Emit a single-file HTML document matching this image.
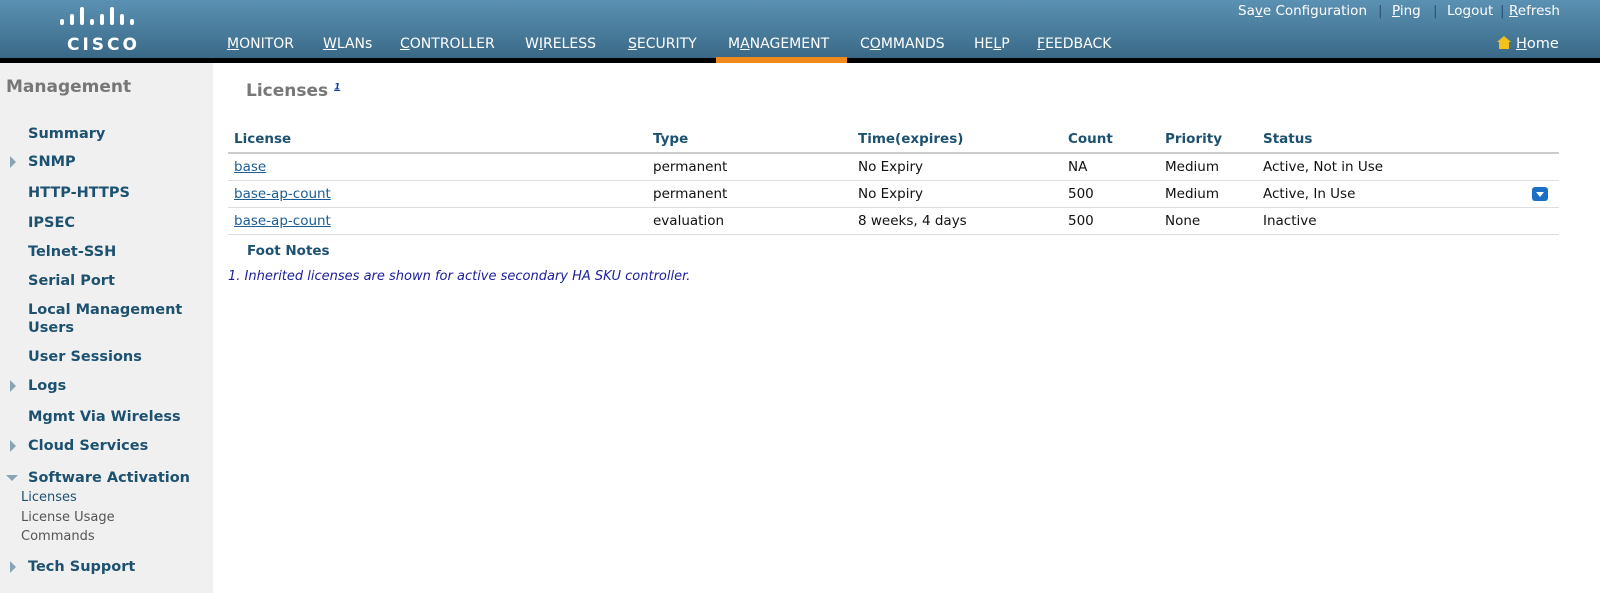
<!DOCTYPE html>
<html><head><style>
body{margin:0;width:1600px;height:593px;overflow:hidden;font-family:"DejaVu Sans",Verdana,sans-serif;background:#fff;position:relative}
#hdr{position:absolute;left:0;top:0;width:1600px;height:58px;background:linear-gradient(#5b91b3,#3a6987)}
#blk{position:absolute;left:0;top:58px;width:1600px;height:5px;background:#000}
.nav{position:absolute;top:36px;color:#fff;font-size:14px;white-space:nowrap}
.u{text-decoration:underline}
.top{position:absolute;top:3px;color:#fff;font-size:13.5px;white-space:nowrap}
.sep{position:absolute;top:3px;color:#2b4f7a;font-size:13.5px}
#side{position:absolute;left:0;top:63px;width:213px;height:530px;background:#f0f0f0}
.si{position:absolute;left:28px;color:#1d5170;font-weight:bold;font-size:14.5px;white-space:nowrap;line-height:18px}
.ar{position:absolute;left:10px;width:0;height:0;border-top:6px solid transparent;border-bottom:6px solid transparent;border-left:6px solid #8aa4b5}
.sub{position:absolute;left:21px;font-size:13px;color:#555;white-space:nowrap}
table{position:absolute;left:228px;top:127px;border-collapse:collapse;font-size:13.5px;width:1331px}
th{color:#1d5170;text-align:left;padding:3px 6px 4px;border-bottom:2px solid #ccc;height:18px}
td{padding:4px 6px 5px;border-bottom:1px solid #ddd;height:17px;color:#111}
td a{color:#1b5d94}
</style></head><body>
<div id="hdr"></div><div id="blk"></div>
<div style="position:absolute;left:716px;top:57px;width:131px;height:6px;background:#f08a1c"></div>
<svg style="position:absolute;left:59px;top:5px" width="76" height="24">
<g fill="#fff"><rect x="1" y="14" width="4" height="6" rx="2"/><rect x="11" y="9" width="4" height="11" rx="2"/><rect x="21" y="2" width="4" height="18" rx="2"/><rect x="31" y="14" width="4" height="6" rx="2"/><rect x="41" y="9" width="4" height="11" rx="2"/><rect x="51" y="2" width="4" height="18" rx="2"/><rect x="61" y="9" width="4" height="11" rx="2"/><rect x="71" y="14" width="4" height="6" rx="2"/></g></svg>
<div style="position:absolute;left:67px;top:35px;color:#fff;font-weight:bold;font-size:17px;letter-spacing:3px">CISCO</div>
<div class="nav" style="left:227px"><span class="u">M</span>ONITOR</div>
<div class="nav" style="left:323px"><span class="u">W</span>LANs</div>
<div class="nav" style="left:400px"><span class="u">C</span>ONTROLLER</div>
<div class="nav" style="left:525px">W<span class="u">I</span>RELESS</div>
<div class="nav" style="left:628px"><span class="u">S</span>ECURITY</div>
<div class="nav" style="left:728px">M<span class="u">A</span>NAGEMENT</div>
<div class="nav" style="left:860px">C<span class="u">O</span>MMANDS</div>
<div class="nav" style="left:974px">HE<span class="u">L</span>P</div>
<div class="nav" style="left:1037px"><span class="u">F</span>EEDBACK</div>
<div class="top" style="left:1238px">Sa<span class="u">v</span>e Configuration</div>
<div class="sep" style="left:1378px">|</div>
<div class="top" style="left:1392px"><span class="u">P</span>ing</div>
<div class="sep" style="left:1433px">|</div>
<div class="top" style="left:1447px">Lo<span class="u">g</span>out</div>
<div class="sep" style="left:1500px">|</div>
<div class="top" style="left:1509px"><span class="u">R</span>efresh</div>
<svg style="position:absolute;left:1497px;top:36px" width="14" height="13"><path d="M7 0L14 6H12V13H2V6H0Z" fill="#f2c11c"/></svg>
<div class="nav" style="left:1516px;font-size:14.5px"><span class="u">H</span>ome</div>
<div id="side"></div>
<div style="position:absolute;left:6px;top:77px;color:#777;font-weight:bold;font-size:17px">Management</div>
<div class="si" style="top:125px">Summary</div>
<div class="ar" style="top:156px"></div><div class="si" style="top:153px">SNMP</div>
<div class="si" style="top:184px">HTTP-HTTPS</div>
<div class="si" style="top:214px">IPSEC</div>
<div class="si" style="top:243px">Telnet-SSH</div>
<div class="si" style="top:272px">Serial Port</div>
<div class="si" style="top:301px">Local Management<br>Users</div>
<div class="si" style="top:348px">User Sessions</div>
<div class="ar" style="top:380px"></div><div class="si" style="top:377px">Logs</div>
<div class="si" style="top:408px">Mgmt Via Wireless</div>
<div class="ar" style="top:440px"></div><div class="si" style="top:437px">Cloud Services</div>
<div style="position:absolute;left:6px;top:475px;border-left:6px solid transparent;border-right:6px solid transparent;border-top:6px solid #8aa4b5"></div><div class="si" style="top:469px">Software Activation</div>
<div class="sub" style="top:490px;color:#1d5170">Licenses</div>
<div class="sub" style="top:510px">License Usage</div>
<div class="sub" style="top:529px">Commands</div>
<div class="ar" style="top:561px"></div><div class="si" style="top:558px">Tech Support</div>
<div style="position:absolute;left:246px;top:81px;color:#777;font-weight:bold;font-size:17px">Licenses <sup style="font-size:9px;color:#1b3f9a;text-decoration:underline;font-style:italic">1</sup></div>
<table>
<tr><th style="width:407px">License</th><th style="width:193px">Type</th><th style="width:198px">Time(expires)</th><th style="width:85px">Count</th><th style="width:86px">Priority</th><th style="width:256px">Status</th><th></th></tr>
<tr><td><a href="#">base</a></td><td>permanent</td><td>No Expiry</td><td>NA</td><td>Medium</td><td>Active, Not in Use</td><td></td></tr>
<tr><td><a href="#">base-ap-count</a></td><td>permanent</td><td>No Expiry</td><td>500</td><td>Medium</td><td>Active, In Use</td><td><div style="width:16px;height:14px;background:#1b6fc4;border-radius:3px;position:relative;left:1px"><div style="position:absolute;left:4px;top:5px;border-left:4px solid transparent;border-right:4px solid transparent;border-top:5px solid #fff"></div></div></td></tr>
<tr><td><a href="#">base-ap-count</a></td><td>evaluation</td><td>8 weeks, 4 days</td><td>500</td><td>None</td><td>Inactive</td><td></td></tr>
</table>
<div style="position:absolute;left:247px;top:243px;color:#1d5170;font-weight:bold;font-size:13.5px">Foot Notes</div>
<div style="position:absolute;left:228px;top:269px;color:#1b1f9a;font-style:italic;font-size:13px">1. Inherited licenses are shown for active secondary HA SKU controller.</div>
</body></html>
